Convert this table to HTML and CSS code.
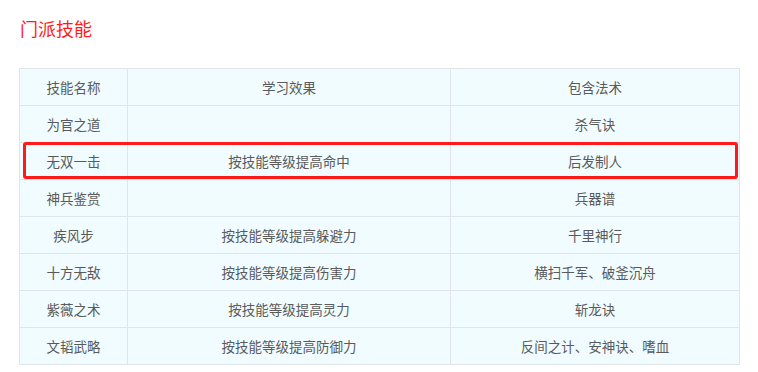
FILE: index.html
```html
<!DOCTYPE html>
<html>
<head>
<meta charset="utf-8">
<link rel="stylesheet" href="styles.css">
</head>
<body>
<div class="page">
  <h2 class="title">门派技能</h2>
  <div class="wrap">
    <table class="skills">
      <colgroup><col class="c1"><col class="c2"><col class="c3"></colgroup>
      <tr><td>技能名称</td><td>学习效果</td><td>包含法术</td></tr>
      <tr><td>为官之道</td><td></td><td>杀气诀</td></tr>
      <tr><td>无双一击</td><td>按技能等级提高命中</td><td>后发制人</td></tr>
      <tr><td>神兵鉴赏</td><td></td><td>兵器谱</td></tr>
      <tr><td>疾风步</td><td>按技能等级提高躲避力</td><td>千里神行</td></tr>
      <tr><td>十方无敌</td><td>按技能等级提高伤害力</td><td>横扫千军、破釜沉舟</td></tr>
      <tr><td>紫薇之术</td><td>按技能等级提高灵力</td><td>斩龙诀</td></tr>
      <tr><td>文韬武略</td><td>按技能等级提高防御力</td><td>反间之计、安神诀、嗜血</td></tr>
    </table>
    <div class="highlight"></div>
  </div>
</div>
</body>
</html>
```
FILE: styles.css
```css
html, body {
  margin: 0;
  padding: 0;
  background: #fff;
}
.page {
  padding: 0 19px;
  font-family: "Noto Sans CJK SC", "Microsoft YaHei", sans-serif;
}
.title {
  margin: 0;
  padding-top: 16px;
  height: 68px;
  box-sizing: border-box;
  font-size: 18px;
  line-height: 24px;
  font-weight: normal;
  color: #ff1a1a;
  padding-left: 1px;
}
.wrap {
  position: relative;
  width: 720px;
}
.skills {
  width: 720px;
  border-collapse: collapse;
  table-layout: fixed;
  font-size: 13.5px;
  color: #5a5a5a;
}
.c1 { width: 108px; }
.c2 { width: 323px; }
.c3 { width: 289px; }
.skills td {
  height: 36px;
  padding: 0;
  border: 1px solid #dfe5e8;
  background: #f0fcff;
  text-align: center;
  vertical-align: middle;
  line-height: 20px;
}
.highlight {
  position: absolute;
  left: 4px;
  top: 74px;
  width: 715px;
  height: 37px;
  box-sizing: border-box;
  border: 3px solid #ff1a1a;
  border-radius: 3px;
}
```
